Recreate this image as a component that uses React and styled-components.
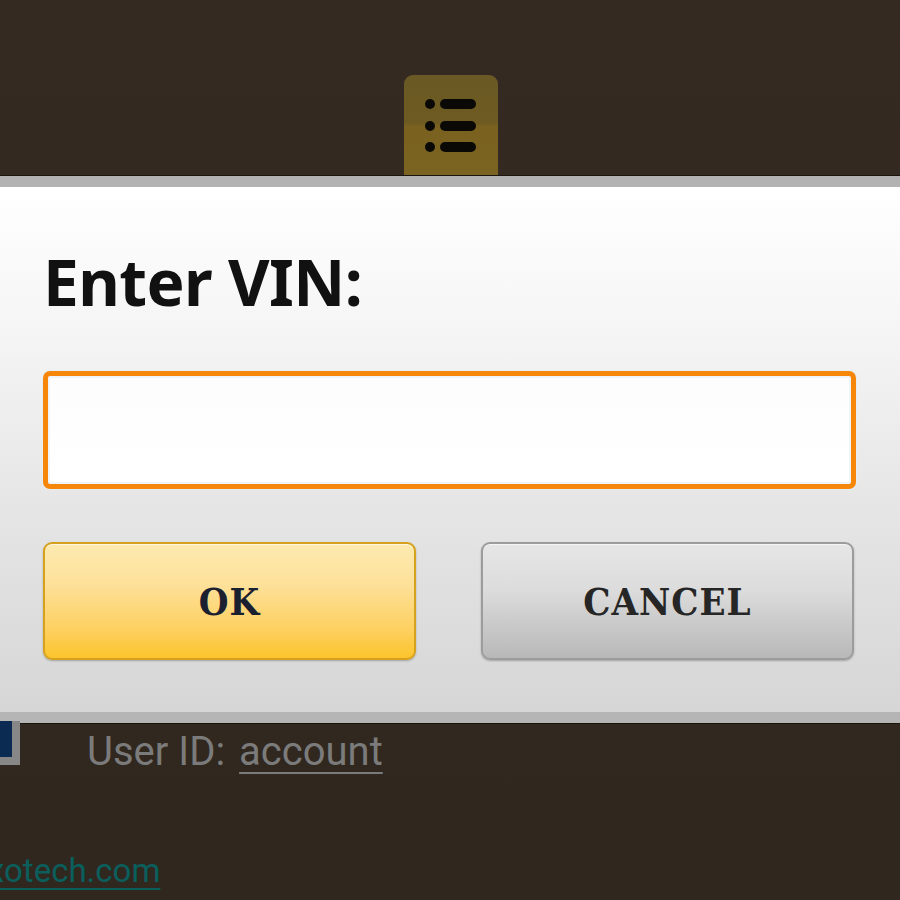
import React from "react";
import styled, { createGlobalStyle } from "styled-components";

const GlobalStyle = createGlobalStyle`
  html, body {
    margin: 0;
    padding: 0;
    background: #332a22;
  }
  body {
    width: 900px;
    height: 900px;
    overflow: hidden;
    font-family: Roboto, "Noto Sans", sans-serif;
  }
`;

const Screen = styled.div`
  width: 900px;
  height: 900px;
  display: flex;
  flex-direction: column;
  background: linear-gradient(180deg, #342a22 0%, #30271f 100%);
  overflow: hidden;
`;

const Header = styled.div`
  height: 175px;
  display: flex;
  justify-content: center;
  align-items: flex-end;
  border-bottom: 1px solid #1e1812;
`;

const MenuButton = styled.div`
  width: 94px;
  height: 100px;
  margin-left: 2px;
  border-radius: 9px 9px 0 0;
  background: linear-gradient(180deg, #6a5924 0%, #6e5b22 48%, #7a6120 52%, #7b6322 100%);
  display: flex;
  justify-content: center;
  padding-top: 20px;
  box-sizing: border-box;
`;

const Dialog = styled.div`
  display: flex;
  flex-direction: column;
  border-top: 11px solid #b2b2b2;
  border-bottom: 11px solid #b5b5b5;
  background: linear-gradient(180deg, #ffffff 0%, #f6f6f6 25%, #e6e6e6 60%, #d6d6d6 100%);
  padding: 0 44px 0 43px;
  box-shadow: 0 -1px 0 #1b150f, 0 1px 0 #1b150f;
`;

const Title = styled.h1`
  margin: 50px 0 0;
  font-family: "Noto Sans", "Open Sans", sans-serif;
  font-weight: 700;
  font-size: 64px;
  line-height: 90px;
  color: #111;
  letter-spacing: -0.6px;
`;

const VinInput = styled.input`
  margin-top: 44px;
  height: 118px;
  box-sizing: border-box;
  border: 5px solid #f6870b;
  border-radius: 7px;
  background: linear-gradient(180deg, #fdfdfd 0%, #ffffff 100%);
  box-shadow: inset 0 0 0 2px #eef4f8, 0 0 0 1px #e4eef4;
  outline: none;
  font-size: 40px;
  padding: 0 16px;
`;

const ButtonRow = styled.div`
  display: grid;
  grid-template-columns: 373px 373px;
  column-gap: 65px;
  margin-top: 53px;
  margin-bottom: 52px;
`;

const DialogButton = styled.button`
  height: 118px;
  border-radius: 9px;
  border: 2px solid ${(p) => (p.$primary ? "#d6a21e" : "#9c9c9c")};
  background: ${(p) =>
    p.$primary
      ? "linear-gradient(180deg, #fdeab0 0%, #fde19a 35%, #fdd060 75%, #fcc42c 100%)"
      : "linear-gradient(180deg, #e6e6e6 0%, #dcdcdc 40%, #c4c4c4 80%, #b8b8b8 100%)"};
  box-shadow: 0 1px 2px rgba(0, 0, 0, 0.25), inset 0 1px 0 rgba(255, 255, 255, 0.6);
  font-family: "DejaVu Serif Condensed", "DejaVu Serif", serif;
  font-weight: 700;
  font-size: 38px;
  color: ${(p) => (p.$primary ? "#1b2030" : "#262626")};
  letter-spacing: 1px;
  padding: 0;
`;

const Below = styled.div`
  display: flex;
  flex-direction: column;
  flex: 1;
`;

const UserRow = styled.div`
  display: flex;
  align-items: flex-start;
  height: 128px;
`;

const Check = styled.div`
  width: 12px;
  height: 36px;
  margin-top: -2px;
  background: #0b2b52;
  border: 8px solid #878787;
  border-left: none;
  border-top: none;
`;

const UserText = styled.div`
  margin-left: 67px;
  margin-top: 3px;
  font-family: Roboto, sans-serif;
  font-size: 40px;
  line-height: 52px;
  color: #7b7b7b;
`;

const AccountLink = styled.span`
  margin-left: 14px;
  text-decoration: underline;
  text-decoration-thickness: 2px;
  text-underline-offset: 7px;
`;

const SiteLink = styled.div`
  margin-left: -12px;
  font-family: Roboto, sans-serif;
  font-size: 33px;
  line-height: 40px;
  color: #0a5f5d;
  text-decoration: underline;
  text-decoration-thickness: 2px;
  text-underline-offset: 6px;
`;

function ListIcon() {
  return (
    <svg width="60" height="60" viewBox="0 0 60 60">
      {[9, 31, 52].map((y) => (
        <g key={y} fill="#0b0906">
          <circle cx="9" cy={y} r="5" />
          <rect x="19" y={y - 5} width="36" height="10" rx="5" />
        </g>
      ))}
    </svg>
  );
}

export default function App() {
  return (
    <Screen>
      <GlobalStyle />
      <Header>
        <MenuButton>
          <ListIcon />
        </MenuButton>
      </Header>
      <Dialog>
        <Title>Enter VIN:</Title>
        <VinInput type="text" />
        <ButtonRow>
          <DialogButton $primary>OK</DialogButton>
          <DialogButton>CANCEL</DialogButton>
        </ButtonRow>
      </Dialog>
      <Below>
        <UserRow>
          <Check />
          <UserText>
            User ID:<AccountLink>account</AccountLink>
          </UserText>
        </UserRow>
        <SiteLink>xotech.com</SiteLink>
      </Below>
    </Screen>
  );
}
